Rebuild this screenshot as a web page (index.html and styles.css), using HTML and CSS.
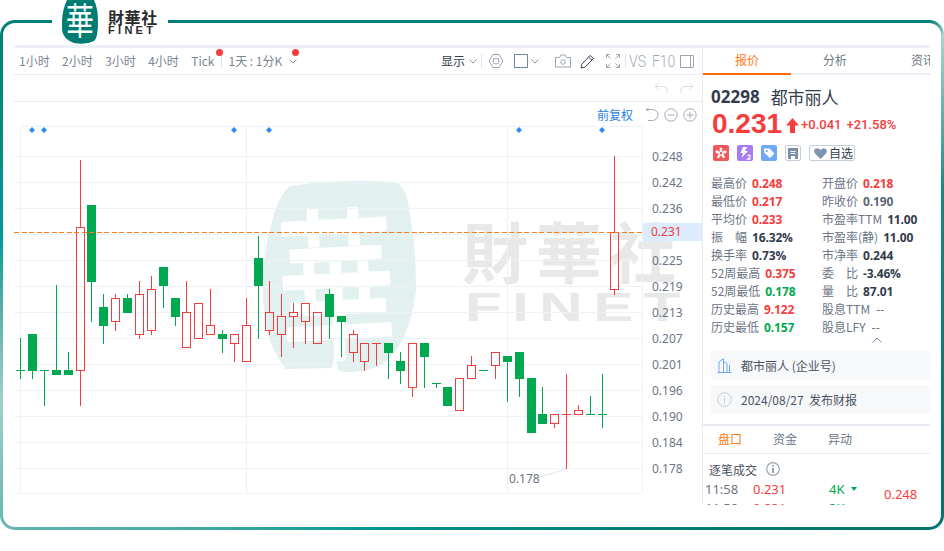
FILE: index.html
```html
<!DOCTYPE html>
<html lang="zh">
<head>
<meta charset="utf-8">
<title>都市丽人 02298</title>
<link rel="stylesheet" href="styles.css">
</head>
<body>
<div class="page">
  <div class="logo">
    <svg class="logo-mark" width="36" height="44" viewBox="0 0 36 44">
      <path d="M5 0H32Q36 8 36 22Q36 38 32 41Q24 45 12 43Q1 39 0 30Q-1 12 5 0Z" fill="#007c72"/>
      <text transform="translate(18 35) scale(.9 1.2)" class="logo-char">華</text>
    </svg>
    <div class="logo-text">
      <span class="logo-cn">財華社</span>
      <span class="logo-en">FINET</span>
    </div>
  </div>
  <div class="frame">
    <div class="main">
      <section class="chart-col">
        <div class="toolbar">
          <div class="periods">
            <span>1小时</span><span>2小时</span><span>3小时</span><span>4小时</span>
            <span class="dotted">Tick</span>
          </div>
          <i class="vsep"></i>
          <span class="kline dotted2">1天 : 1分K</span>
          <svg class="chev chev-k" width="8" height="5" viewBox="0 0 8 5"><path d="M.5.5 4 4 7.500.5"/></svg>
          <div class="tools">
            <span class="show">显示</span>
            <svg class="chev chev-show" width="8" height="5" viewBox="0 0 8 5"><path d="M.5.5 4 4 7.500.5"/></svg>
            <i class="vsep vsep-r"></i>
            <svg class="ic" width="16" height="16" viewBox="0 0 16 16"><path d="M5 1.500h6l3.800 6.500-3.800 6.500H5L1.200 8z" stroke-linejoin="round"/><circle cx="8" cy="8" r="3"/></svg>
            <span class="square"></span>
            <svg class="chev chev-sq" width="8" height="5" viewBox="0 0 8 5"><path d="M.5.5 4 4 7.500.5"/></svg>
            <svg class="ic ic-cam" width="16" height="14" viewBox="0 0 16 14"><path d="M.5 3.500h4l1.500-2.500h4l1.500 2.500h4v9.500H.5z"/><circle cx="8" cy="8" r="2.300"/></svg>
            <svg class="ic ic-pen" width="15" height="15" viewBox="0 0 15 15"><path d="M1 14l.8-3.700L10 1.500l3.500 3-8.500 8.700zM8.500 3.200l3.500 3"/></svg>
            <svg class="ic ic-full" width="14" height="14" viewBox="0 0 14 14"><path d="M.5 4V.5H4M1 1l3.500 3.500M10 .5h3.500V4M13 1 9.500 4.500M.5 10v3.500H4M1 13l3.500-3.500M13.500 10v3.500H10M13 13 9.500 9.500"/></svg>
            <i class="vsep vsep-t"></i>
            <span class="thin thin-v">VS</span>
            <span class="thin thin-f">F10</span>
            <svg class="ic ic-panel" width="14" height="13" viewBox="0 0 14 13"><path d="M.5.500h13v12H.5zM10.500.500v12"/></svg>
          </div>
        </div>
        <div class="history">
          <svg class="hist" width="14" height="12" viewBox="0 0 14 12"><path d="M5 1 1 4.500 5 8M1 4.500h8q4 0 4 3.500v3"/></svg>
          <svg class="hist" width="14" height="12" viewBox="0 0 14 12"><path d="M9 1l4 3.500L9 8M13 4.500H5q-4 0-4 3.500v3"/></svg>
        </div>
        <div class="chart">
          <svg class="plot" width="688" height="403" viewBox="14 102 688 403">
            <g class="wm">
              <path class="wm-blob" d="M290 186Q340 178 395 182Q404 186 407 198Q416 240 416 290Q410 345 380 366Q350 376 338 370L335 352 332 368 286 369Q270 350 265 320Q258 270 272 222Q278 196 290 186Z"/>
              <text class="wm-char" transform="translate(340 346) rotate(-3) scale(.9 1.25)">華</text>
              <text class="wm-cn" x="462" y="278">財華社</text>
              <text class="wm-en" transform="translate(465 321) scale(1.5 1)">FINET</text>
            </g>
            <path class="grid" d="M14 156.500H642M14 182.500H642M14 208.500H642M14 234.500H642M14 260.500H642M14 286.500H642M14 312.500H642M14 338.500H642M14 364.500H642M14 390.500H642M14 416.500H642M14 442.500H642M14 468.500H642M14 493.500H642M20 126.500H642M20.500 126V493M246.500 126V493M507.500 126V493M642.500 126V493"/>
            <path class="dia" d="M32 127l3 3-3 3-3-3zM44 127l3 3-3 3-3-3zM234 127l3 3-3 3-3-3zM269 127l3 3-3 3-3-3zM519 127l3 3-3 3-3-3zM602 127l3 3-3 3-3-3z"/>
            <rect class="last-bg" x="643" y="223" width="59" height="18"/>
            <path class="wick-g" d="M20.500 338V379M32.500 370V379M44.500 370V406M56.500 285V370M68.500 352V370M91.500 282V322M103.500 294V344M127.500 294V298M163.500 286V308M175.500 317V326M222.500 330V353M258.500 236V339M329.500 289V339M341.500 322V357M388.500 353V379M400.500 352V384M424.500 357V388M436.500 383V388M507.500 362V402M519.500 379V397M542.500 387V414M590.500 396V414M602.500 374V428M16 370.500H25M40 370.500H49M432 383.500H441M479 370.500H488M586 414.500H595M598 414.500H607"/>
            <path class="body-g" d="M28 334h9v37h-9zM52 370h9v5h-9zM64 370h9v5h-9zM87 205h9v77h-9zM99 307h9v19h-9zM123 298h9v15h-9zM159 267h9v19h-9zM171 298h9v19h-9zM218 334h9v5h-9zM254 258h9v28h-9zM325 294h9v23h-9zM337 316h9v6h-9zM384 343h9v10h-9zM396 361h9v10h-9zM420 343h9v14h-9zM443 387h9v19h-9zM503 356h9v6h-9zM515 352h9v27h-9zM527 378h9v55h-9zM538 414h9v10h-9z"/>
            <path class="wick-r" d="M80.500 160V227M80.500 371V406M115.500 294V298M115.500 322V331M139.500 281V294M139.500 335V339M151.500 276V289M151.500 330V335M186.500 281V312M210.500 289V325M234.500 343V362M246.500 298V325M269.500 281V312M269.500 330V335M281.500 294V316M281.500 334V357M293.500 303V312M293.500 316V348M305.500 321V344M353.500 330V334M353.500 352V362M364.500 361V371M376.500 343V366M412.500 387V397M471.500 356V365M495.500 365V379M554.500 423V428M566.500 374V469M578.500 405V411M614.500 156V232M614.500 289V295M372 343.500H381M562 414.500H571"/>
            <path class="body-r" d="M76.500 227.500h8v143h-8zM111.500 298.500h8v23h-8zM135.500 294.500h8v40h-8zM147.500 289.500h8v41h-8zM182.500 312.500h8v35h-8zM194.500 303.500h8v35h-8zM206.500 325.500h8v9h-8zM230.500 334.500h8v9h-8zM242.500 325.500h8v36h-8zM265.500 312.500h8v18h-8zM277.500 316.500h8v18h-8zM289.500 312.500h8v4h-8zM301.500 303.500h8v18h-8zM313.500 312.500h8v31h-8zM349.500 334.500h8v18h-8zM360.500 343.500h8v18h-8zM408.500 343.500h8v44h-8zM455.500 378.500h8v32h-8zM467.500 365.500h8v13h-8zM491.500 352.500h8v13h-8zM550.500 414.500h8v9h-8zM574.500 410.500h8v4h-8zM610.500 232.500h8v57h-8z"/>
            <path class="last-line" d="M14 232.500H642"/>
            <path class="ann-line" d="M537 478 566 469"/>
            <text class="ann" x="509" y="483">0.178</text>
            <g class="axis">
              <text x="652" y="161">0.248</text><text x="652" y="187">0.242</text><text x="652" y="213">0.236</text>
              <text x="651" y="236" class="axis-last">0.231</text>
              <text x="652" y="265">0.225</text><text x="652" y="291">0.219</text><text x="652" y="317">0.213</text>
              <text x="652" y="343">0.207</text><text x="652" y="369">0.201</text><text x="652" y="395">0.196</text>
              <text x="652" y="421">0.190</text><text x="652" y="447">0.184</text><text x="652" y="473">0.178</text>
            </g>
          </svg>
          <div class="chart-ctl">
            <span class="adj">前复权</span>
            <svg class="ctl" width="14" height="14" viewBox="0 0 14 14"><path d="M1 1.500h6.500a5.500 5.500 0 0 1 0 11H3M1 1.500l2.500-1M1 1.500l2.500 1.500"/></svg>
            <svg class="ctl" width="14" height="14" viewBox="0 0 14 14"><circle cx="7" cy="7" r="6.200"/><path d="M3.500 7h7"/></svg>
            <svg class="ctl" width="14" height="14" viewBox="0 0 14 14"><circle cx="7" cy="7" r="6.200"/><path d="M3.500 7h7M7 3.500v7"/></svg>
          </div>
        </div>
      </section>
      <aside class="side">
        <div class="tabs">
          <span class="tab on">报价</span><span class="tab">分析</span><span class="tab">资讯</span>
        </div>
        <div class="quote">
          <div class="name"><b>02298</b><span>都市丽人</span></div>
          <div class="price">
            <strong>0.231</strong>
            <svg width="13" height="15" viewBox="0 0 13 15"><path d="M6.500 0 13 7.500H9V15H4V7.500H0z" fill="#f53d3d"/></svg>
            <span class="chg">+0.041</span><span class="chg">+21.58%</span>
          </div>
          <div class="badges">
            <svg class="bdg" width="16" height="16" viewBox="0 0 16 16"><rect width="16" height="16" rx="2" fill="#f2575a"/><g fill="#fff"><ellipse cx="8" cy="4.800" rx="1.400" ry="2.400"/><ellipse cx="11.300" cy="7.200" rx="1.400" ry="2.400" transform="rotate(72 11.300 7.200)"/><ellipse cx="10" cy="11" rx="1.400" ry="2.400" transform="rotate(144 10 11)"/><ellipse cx="6" cy="11" rx="1.400" ry="2.400" transform="rotate(216 6 11)"/><ellipse cx="4.700" cy="7.200" rx="1.400" ry="2.400" transform="rotate(288 4.700 7.200)"/></g></svg>
            <svg class="bdg" width="16" height="16" viewBox="0 0 16 16"><rect width="16" height="16" rx="2" fill="#a97bf0"/><path d="M6 2h4L8 6h3L4.500 13 6 8H3.500z" fill="#fff"/><path d="M10.500 10.500q2.500-1 2.800.6.100 1-2.600 3h3" fill="none" stroke="#fff" stroke-width="1.200"/></svg>
            <svg class="bdg" width="16" height="16" viewBox="0 0 16 16"><rect width="16" height="16" rx="2" fill="#6ea8f7"/><path d="M3 3.500h5.500l5 5-4.500 4.500-6-5.500z" fill="#fff"/><circle cx="5.800" cy="6" r="1.100" fill="#6ea8f7"/></svg>
            <span class="bdg-out"><svg width="10" height="11" viewBox="0 0 10 11"><path d="M0 0h10v11H7V8H3v3H0zM2.500 3h5v1h-5zM2.500 5h5v1h-5z" fill="#7c8ea8" fill-rule="evenodd"/></svg></span>
            <span class="fav"><svg width="13" height="11" viewBox="0 0 13 11"><path d="M6.500 11 1 5.500Q-1 2.500 1.500.8 4.500-.8 6.500 2 8.500-.8 11.500.8 14 2.500 12 5.500z" fill="#7c93b3"/></svg>自选</span>
          </div>
          <div class="stats">
            <div class="stat"><label>最高价</label><b class="up">0.248</b></div>
            <div class="stat"><label>开盘价</label><b class="up">0.218</b></div>
            <div class="stat"><label>最低价</label><b class="up">0.217</b></div>
            <div class="stat"><label>昨收价</label><b class="flat">0.190</b></div>
            <div class="stat"><label>平均价</label><b class="up">0.233</b></div>
            <div class="stat"><label>市盈率TTM</label><b>11.00</b></div>
            <div class="stat"><label class="just">振 幅</label><b>16.32%</b></div>
            <div class="stat"><label>市盈率(静)</label><b>11.00</b></div>
            <div class="stat"><label>换手率</label><b>0.73%</b></div>
            <div class="stat"><label>市净率</label><b>0.244</b></div>
            <div class="stat"><label>52周最高</label><b class="up">0.375</b></div>
            <div class="stat"><label class="just">委 比</label><b>-3.46%</b></div>
            <div class="stat"><label>52周最低</label><b class="down">0.178</b></div>
            <div class="stat"><label class="just">量 比</label><b>87.01</b></div>
            <div class="stat"><label>历史最高</label><b class="up">9.122</b></div>
            <div class="stat"><label>股息TTM</label><em>--</em></div>
            <div class="stat"><label>历史最低</label><b class="down">0.157</b></div>
            <div class="stat"><label>股息LFY</label><em>--</em></div>
          </div>
          <svg class="collapse" width="10" height="6" viewBox="0 0 10 6"><path d="M.5 5.500 5 1l4.500 4.500"/></svg>
          <div class="card">
            <svg width="15" height="15" viewBox="0 0 15 15"><path d="M.5 14.500h14M2 14.500V4L6.500.8V14.500M6.500 3.500 10 5.500v9M12.500 14.500V7" fill="none" stroke="#6ea8f7"/></svg>
            <span>都市丽人 (企业号)</span>
          </div>
          <div class="card">
            <svg width="15" height="15" viewBox="0 0 15 15"><circle cx="7.500" cy="7.500" r="6.800" fill="none" stroke="#c9ccd2"/><path d="M7 3.500h1v1.200H7zM7 6h1v5.500H7z" fill="#c9ccd2"/></svg>
            <span>2024/08/27&nbsp; 发布财报</span>
          </div>
        </div>
        <div class="tabs2">
          <span class="on">盘口</span><span>资金</span><span>异动</span>
        </div>
        <div class="tape-head">
          <span>逐笔成交</span>
          <svg width="14" height="14" viewBox="0 0 14 14"><circle cx="7" cy="7" r="6.300" fill="none" stroke="#9aa3b0" stroke-width="1.200"/><path d="M6.300 3h1.400v1.500H6.300zM6.300 6h1.400v5H6.300z" fill="#6f7a8a"/></svg>
        </div>
        <div class="tape">
          <div class="tape-rows">
            <div class="trade"><span class="t">11:58</span><span class="p">0.231</span><span class="v">4K</span><i class="tri"></i></div>
            <div class="trade"><span class="t">11:58</span><span class="p">0.231</span><span class="v">3K</span><i class="tri"></i></div>
          </div>
          <span class="tape-high">0.248</span>
        </div>
      </aside>
    </div>
  </div>
</div>
</body>
</html>
```
FILE: styles.css
```css
* { box-sizing: border-box; }
html, body { margin: 0; padding: 0; background: #fff; }
body {
  font-family: "Noto Sans CJK SC", "Noto Sans", sans-serif;
  font-size: 12px;
  color: #333c4c;
}
.page { position: relative; width: 944px; height: 551px; overflow: hidden; padding-top: 20px; }

.logo {
  position: absolute; left: 52px; top: 0; width: 116px; height: 44px;
  background: #fff; display: flex; padding-left: 10px; gap: 10px;
}
.logo-mark { flex: none; }
.logo-char { font: 400 31px "Noto Sans CJK TC", sans-serif; fill: #fff; text-anchor: middle; }
.logo-text { display: flex; flex-direction: column; padding-top: 9px; color: #2b2b2b; }
.logo-cn { font: 700 16px/17px "Noto Sans CJK TC", sans-serif; letter-spacing: .6px; white-space: nowrap; }
.logo-en { font: 700 11px/8px "Liberation Sans", sans-serif; letter-spacing: 3.300px; }

.frame {
  width: 944px; height: 510px;
  border: 3px solid transparent; border-radius: 15px;
  background:
    linear-gradient(#fff, #fff) padding-box,
    conic-gradient(from 0deg at 50% 50%, #007f78 0deg, #007f78 61deg, #a8d5d0 63deg, #118a80 80deg, #00736c 120deg, #009490 200deg, #5fb3ad 240deg, #a0d0cb 255deg, #5fb0ab 265deg, #009a96 275deg, #0a8a84 286deg, #007f78 300deg, #007f78 360deg) border-box;
  padding: 22px 11px 0;
}
.main { display: flex; height: 460px; border-top: 3px solid #edf0f4; overflow: hidden; }

.chart-col { width: 688px; flex: none; display: flex; flex-direction: column; }
.toolbar {
  height: 27px; flex: none; display: flex; align-items: center;
  padding: 0 8px 0 5px; border-bottom: 1px solid #e8ebef; color: #7c8594;
}
.periods { display: flex; gap: 12.400px; line-height: 25px; margin-top: -2px; }
.dotted, .dotted2 { position: relative; }
.dotted::after, .dotted2::after {
  content: ""; position: absolute; width: 7px; height: 7px; border-radius: 50%; background: #f53d3d;
}
.dotted::after { right: -9px; top: 1px; }
.dotted2::after { right: -17px; top: -3px; }
.vsep { width: 1px; height: 14px; background: #dfe3e8; margin: 0 5px 0 7px; flex: none; }
.kline { white-space: nowrap; margin-left: 1px; margin-top: -2px; }
.chev { fill: none; stroke: #8a93a2; margin-left: 5px; flex: none; }
.chev-k { margin-left: 7px; }
.tools { margin-left: auto; display: flex; align-items: center; }
.show { color: #333c4c; margin-top: -2px; }
.chev-show { margin-left: 4px; }
.vsep-r { margin: 0 6px 0 4px; }
.ic { fill: none; stroke: #9aa3b0; flex: none; }
.square { width: 14px; height: 14px; border: 1px solid #6f86a5; margin-left: 10px; flex: none; }
.chev-sq { margin-left: 3px; }
.ic-cam { margin-left: 16px; }
.ic-pen { margin-left: 9px; stroke: #3d4553; }
.ic-full { margin-left: 11px; }
.vsep-t { margin: 0 3px 0 5px; }
.thin { font: 300 17px/1 "Roboto", sans-serif; color: #a3abb6; flex: none; white-space: nowrap; transform-origin: left center; }
.thin-v { width: 17px; transform: scaleX(.83); }
.thin-f { width: 21px; margin-left: 6px; transform: scaleX(.82); }
.ic-panel { margin-left: 7px; }

.history {
  height: 27px; flex: none; display: flex; justify-content: flex-end; align-items: center;
  gap: 12px; padding-right: 8px; border-bottom: 1px solid #e8ebef;
}
.hist { fill: none; stroke: #dadde2; }

.chart { position: relative; flex: 1; min-height: 0; }
.plot { display: block; }
.grid { fill: none; stroke: #edf2f7; stroke-width: 1; shape-rendering: crispEdges; }
.dia { fill: #2a8cf0; }
.last-bg { fill: #dcecfc; }
.wick-g { fill: none; stroke: #00a94f; shape-rendering: crispEdges; }
.body-g { fill: #00a94f; shape-rendering: crispEdges; }
.wick-r, .body-r { fill: none; stroke: #f23d3d; shape-rendering: crispEdges; }
.wm-blob { fill: #e2f0ef; }
.wm-char {
  font: 400 130px "Noto Sans CJK TC", sans-serif; fill: #fff; text-anchor: middle;
  stroke: #fff; stroke-width: 3px; stroke-linejoin: round;
}
.wm-cn { font: 700 66px "Noto Sans CJK TC", sans-serif; fill: #e8e8e8; letter-spacing: 8px; }
.wm-en { font: 700 40px "Liberation Sans", sans-serif; fill: #e8e8e8; letter-spacing: 7px; }
.last-line { stroke: #ff7a14; stroke-dasharray: 5 2.500; fill: none; shape-rendering: crispEdges; }
.ann-line { stroke: #dfe3e8; fill: none; }
.ann, .axis text { font: 400 12px "Noto Sans", "Noto Sans CJK SC", sans-serif; fill: #6c7585; }
.axis text.axis-last { fill: #f23d3d; }

.chart-ctl {
  position: absolute; top: 4px; right: 5px; display: flex; align-items: center; gap: 5px;
}
.adj { color: #2a7de1; margin-right: 7px; line-height: 18px; }
.ctl { fill: none; stroke: #a3abb6; }

.side {
  width: 228px; flex: none; border-left: 1px solid #e8edf3; overflow: hidden;
}
.tabs { display: flex; height: 27px; border-bottom: 2px solid #e8edf3; }
.tab { width: 88px; flex: none; text-align: center; line-height: 24px; color: #6c7585; height: 27px; }
.tab.on { color: #ff7a14; border-bottom: 2px solid #ff6a00; }
.quote { padding: 11px 0 0 8px; }
.name { display: flex; align-items: center; height: 20px; gap: 11px; }
.name b { font: 700 17px "Noto Sans", sans-serif; }
.name span { font-size: 17px; }
.price { display: flex; align-items: center; height: 32px; color: #f53d3d; margin: 2px 0 0 1px; }
.price strong { font: 700 28px "Liberation Sans", sans-serif; }
.price svg { margin: 2px 2px 0 4px; flex: none; }
.chg { font: 500 13px "Roboto", sans-serif; margin-right: 5px; }
.badges { display: flex; align-items: center; height: 16px; margin: 5px 0 0 2px; gap: 8px; }
.bdg { flex: none; }
.bdg-out {
  width: 16px; height: 16px; border: 1px solid #c6d0dc; border-radius: 2px; display: flex;
  align-items: center; justify-content: center; flex: none;
}
.fav {
  display: flex; align-items: center; gap: 2px; height: 16px; width: 46px; padding-left: 4px;
  border: 1px solid #c6d0dc; border-radius: 2px; color: #333c4c; line-height: 14px; font-size: 12px;
}
.stats { display: grid; grid-template-columns: 111px 1fr; margin-top: 13px; }
.stat { display: flex; height: 18px; line-height: 18px; white-space: nowrap; align-items: center; gap: 5px; }
.stat label { color: #6c7585; }
.stat label.just { width: 36px; text-align: justify; text-align-last: justify; }
.stat b { font: 700 12px "Open Sans", sans-serif; color: #333c4c; letter-spacing: -.15px; }
.stat b.up { color: #f53d3d; }
.stat b.down { color: #00a94f; }
.stat b.flat { color: #5c6675; }
.stat em { font-style: normal; color: #5c6675; margin-left: 1px; }
.collapse { display: block; margin: 0 0 0 161px; fill: none; stroke: #7c8ea8; height: 8px; }
.card {
  height: 29px; margin-top: 5px; background: #f7f8fa; border-radius: 4px; display: flex;
  align-items: center; gap: 9px; padding-left: 6px; color: #4a5361;
}
.collapse + .card { margin-top: 7px; }
.tabs2 {
  display: flex; gap: 31px; height: 30px; margin-top: 10px; padding: 0 0 0 15px; line-height: 26px;
  border-top: 2px solid #e6e9ef; border-bottom: 1px solid #e8edf3; color: #6c7585;
}
.tabs2 .on { color: #ff7a14; }
.tape-head { display: flex; align-items: center; gap: 9px; height: 25px; padding: 5px 0 0 6px; color: #4a5361; }
.tape { display: flex; padding-left: 2px; }
.tape-rows { width: 179px; flex: none; }
.trade { display: flex; align-items: center; height: 19px; font: 400 13px "Noto Sans", sans-serif; }
.t { width: 48px; color: #6c7585; }
.p { width: 76px; color: #f53d3d; }
.v { color: #00a94f; width: 22px; }
.tri { width: 0; height: 0; border: 3.500px solid transparent; border-top: 4px solid #00a94f; border-bottom: 0; }
.tape-high { font: 400 13px "Noto Sans", sans-serif; color: #f53d3d; margin-top: 6px; }
```
